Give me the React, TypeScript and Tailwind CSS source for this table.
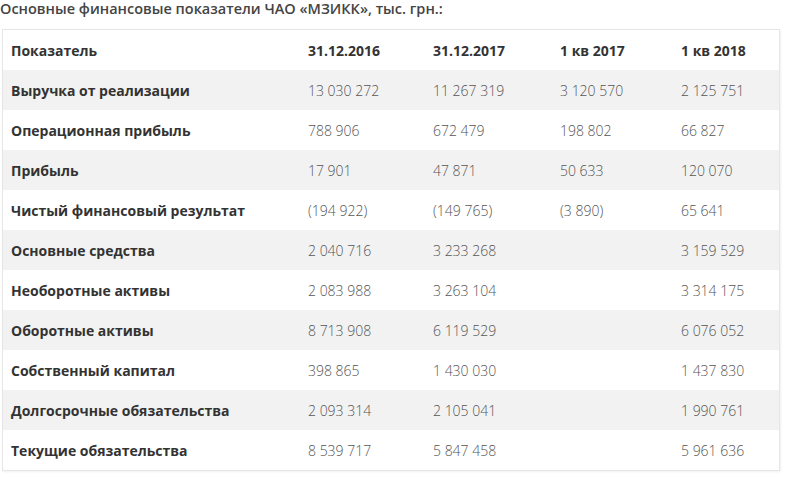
import React from 'react';

const rows: string[][] = [
  ['Выручка от реализации', '13 030 272', '11 267 319', '3 120 570', '2 125 751'],
  ['Операционная прибыль', '788 906', '672 479', '198 802', '66 827'],
  ['Прибыль', '17 901', '47 871', '50 633', '120 070'],
  ['Чистый финансовый результат', '(194 922)', '(149 765)', '(3 890)', '65 641'],
  ['Основные средства', '2 040 716', '3 233 268', '', '3 159 529'],
  ['Необоротные активы', '2 083 988', '3 263 104', '', '3 314 175'],
  ['Оборотные активы', '8 713 908', '6 119 529', '', '6 076 052'],
  ['Собственный капитал', '398 865', '1 430 030', '', '1 437 830'],
  ['Долгосрочные обязательства', '2 093 314', '2 105 041', '', '1 990 761'],
  ['Текущие обязательства', '8 539 717', '5 847 458', '', '5 961 636'],
];

const head = ['Показатель', '31.12.2016', '31.12.2017', '1 кв 2017', '1 кв 2018'];

export default function App() {
  return (
    <div className="w-[787px] h-[481px] bg-white text-[14px] text-[#333]" style={{ fontFamily: '"Open Sans", "DejaVu Sans", sans-serif' }}>
      <div className="h-[18px] leading-[18px] text-[14.5px] font-semibold text-[#444] whitespace-nowrap">
        Основные финансовые показатели ЧАО «МЗИКК», тыс. грн.:
      </div>
      <div className="mt-[11px] ml-[2px] w-[778px] border border-[#e6e6e6] shadow-[1px_1px_2px_rgba(0,0,0,0.06)]">
        <table className="w-full border-collapse table-fixed">
          <colgroup>
            <col className="w-[297px]" />
            <col className="w-[125px]" />
            <col className="w-[127px]" />
            <col className="w-[121px]" />
            <col />
          </colgroup>
          <thead>
            <tr className="h-[40px]">
              {head.map((h) => (
                <th key={h} className="text-left font-bold pl-[8px] text-[#333] whitespace-nowrap">{h}</th>
              ))}
            </tr>
          </thead>
          <tbody>
            {rows.map((r, i) => (
              <tr key={r[0]} className={i % 2 === 0 ? 'h-[40px] bg-[#f2f2f2]' : 'h-[40px] bg-white'}>
                <td className="pl-[8px] font-bold text-[#333] whitespace-nowrap">{r[0]}</td>
                {r.slice(1).map((v, j) => (
                  <td key={j} className="pl-[8px] font-light text-[#555] whitespace-nowrap">{v}</td>
                ))}
              </tr>
            ))}
          </tbody>
        </table>
      </div>
    </div>
  );
}
